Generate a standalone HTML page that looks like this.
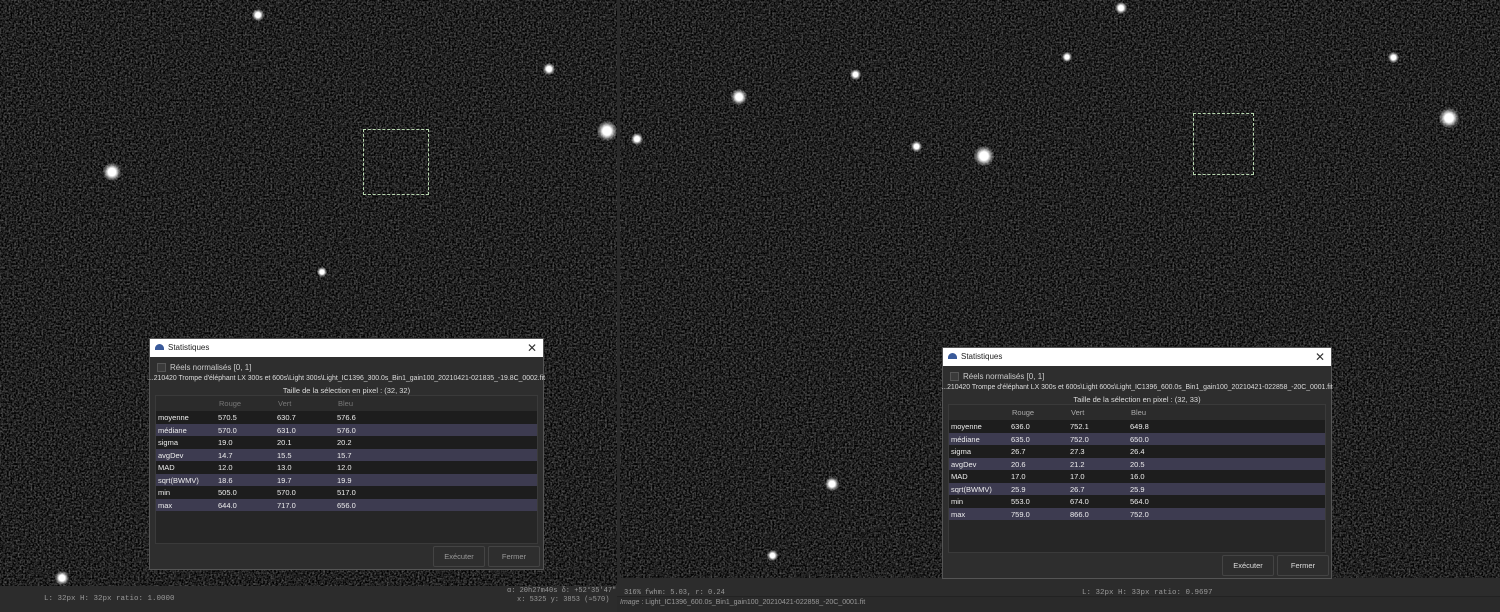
<!DOCTYPE html>
<html><head><meta charset="utf-8"><style>
*{margin:0;padding:0;box-sizing:border-box}
body{width:1500px;height:612px;background:#2a2a2a;position:relative;overflow:hidden;font-family:"Liberation Sans",sans-serif}
.field{position:absolute;background:#1c1c1c;overflow:hidden}
.star{position:absolute;border-radius:50%;background:radial-gradient(circle,#fff 0,#fff 30%,rgba(255,255,255,.35) 55%,rgba(255,255,255,0) 75%)}
.sel{position:absolute;border:1px dashed #b8d8b0}
.dlg{position:absolute;background:#2e2e2e;border:1px solid #555;color:#ddd;font-size:8px}
.tb{height:18px;background:#fff;color:#222;font-size:8px;line-height:18px;padding-left:18px;position:relative}
.tb .ic{position:absolute;left:5px;top:5px;width:9px;height:6px;background:#3a5a9a;border-radius:5px 5px 0 0}
.tb .x{position:absolute;right:6px;top:0;font-size:12px;color:#333}
.cb{position:absolute;left:7px;top:24px;width:9px;height:9px;background:#3a3a3a;border:1px solid #555}
.lbl{position:absolute;left:20px;top:24px;font-size:8px;color:#ccc}
.path{position:absolute;left:-10px;right:-10px;top:36px;text-align:center;font-size:6.9px;color:#ddd;white-space:nowrap}
.size{position:absolute;left:0;right:0;top:47px;text-align:center;font-size:7.5px;color:#ddd}
.tab{position:absolute;left:5px;right:5px;top:56px;height:149px;background:#262626;border:1px solid #3a3a3a}
.hd{height:15px;background:#2b2b2b;position:relative;color:#777;font-size:7.5px}
.row{height:12.5px;position:relative;font-size:7.5px;color:#eee}
.row:nth-child(odd){background:#1d1d1d}.row:nth-child(even){background:#3d3b50}
.c{position:absolute;top:2px}
.btn{position:absolute;top:207px;height:21px;width:52px;border:1px solid #444;background:#2e2e2e;color:#999;font-size:7.5px;text-align:center;line-height:19px;border-radius:2px}
.mono{font-family:"Liberation Mono",monospace;font-size:7.5px;color:#999;position:absolute;white-space:nowrap}
</style></head><body>
<svg width="0" height="0" style="position:absolute">
<filter id="g" color-interpolation-filters="sRGB"><feTurbulence type="fractalNoise" baseFrequency="0.55" numOctaves="2" seed="7"/><feColorMatrix type="saturate" values="0"/><feComponentTransfer><feFuncR type="linear" slope="0.9" intercept="-0.32"/><feFuncG type="linear" slope="0.9" intercept="-0.32"/><feFuncB type="linear" slope="0.9" intercept="-0.32"/><feFuncA type="linear" slope="0" intercept="1"/></feComponentTransfer></filter></svg>

<div class="field" style="left:0;top:0;width:617px;height:586px">
<svg width="617" height="586" style="position:absolute;left:0;top:0"><rect width="617" height="586" filter="url(#g)"/></svg>
<div class="star" style="left:103px;top:163px;width:18px;height:18px"></div>
<div class="star" style="left:597px;top:121px;width:20px;height:20px"></div>
<div class="star" style="left:543px;top:63px;width:12px;height:12px"></div>
<div class="star" style="left:252px;top:9px;width:12px;height:12px"></div>
<div class="star" style="left:317px;top:267px;width:10px;height:10px"></div>
<div class="star" style="left:55px;top:571px;width:14px;height:14px"></div>
<div class="sel" style="left:363px;top:129px;width:66px;height:66px"></div>
</div>

<div class="field" style="left:620px;top:0;width:880px;height:578px">
<svg width="880" height="578" style="position:absolute;left:0;top:0"><rect width="880" height="578" filter="url(#g)"/></svg>
<div class="star" style="left:111px;top:89px;width:16px;height:16px"></div>
<div class="star" style="left:354px;top:146px;width:20px;height:20px"></div>
<div class="star" style="left:819px;top:108px;width:20px;height:20px"></div>
<div class="star" style="left:205px;top:477px;width:14px;height:14px"></div>
<div class="star" style="left:495px;top:2px;width:12px;height:12px"></div>
<div class="star" style="left:230px;top:69px;width:11px;height:11px"></div>
<div class="star" style="left:11px;top:133px;width:12px;height:12px"></div>
<div class="star" style="left:291px;top:141px;width:11px;height:11px"></div>
<div class="star" style="left:768px;top:52px;width:11px;height:11px"></div>
<div class="star" style="left:147px;top:550px;width:11px;height:11px"></div>
<div class="star" style="left:442px;top:52px;width:10px;height:10px"></div>
<div class="sel" style="left:573px;top:113px;width:61px;height:62px"></div>
</div>

<div style="position:absolute;left:0;top:586px;width:617px;height:26px;background:#2c2c2c"></div>
<div style="position:absolute;left:617px;top:578px;width:883px;height:18px;background:#2c2c2c"></div>
<div style="position:absolute;left:617px;top:596px;width:883px;height:16px;background:#2a2a2a;border-top:1px solid #222"></div>
<div class="mono" style="left:44px;top:595px">L: 32px H: 32px ratio: 1.0000</div>
<div class="mono" style="left:507px;top:587px;font-size:7px">α: 20h27m40s δ: +52°35'47"</div>
<div class="mono" style="left:517px;top:596px;font-size:7px">x: 5325 y: 3853 (≈570)</div>
<div class="mono" style="left:624px;top:589px;font-size:7px">316%   fwhm: 5.03, r: 0.24</div>
<div class="mono" style="left:1082px;top:589px">L: 32px H: 33px ratio: 0.9697</div>
<div style="position:absolute;left:620px;top:599px;font-size:7px;color:#999"><i>Image</i> : Light_IC1396_600.0s_Bin1_gain100_20210421-022858_-20C_0001.fit</div>

<div class="dlg" style="left:149px;top:338px;width:395px;height:232px">
<div class="tb"><span class="ic"></span>Statistiques<span class="x">✕</span></div>
<div class="cb"></div><div class="lbl">Réels normalisés [0, 1]</div>
<div class="path">...210420 Trompe d'éléphant LX 300s et 600s\Light 300s\Light_IC1396_300.0s_Bin1_gain100_20210421-021835_-19.8C_0002.fit</div>
<div class="size">Taille de la sélection en pixel : (32, 32)</div>
<div class="tab">
<div class="hd"><span class="c" style="left:63px;top:3px">Rouge</span><span class="c" style="left:122px;top:3px">Vert</span><span class="c" style="left:182px;top:3px">Bleu</span></div>
<div>
<div class="row"><span class="c" style="left:2px">moyenne</span><span class="c" style="left:62px">570.5</span><span class="c" style="left:121px">630.7</span><span class="c" style="left:181px">576.6</span></div>
<div class="row"><span class="c" style="left:2px">médiane</span><span class="c" style="left:62px">570.0</span><span class="c" style="left:121px">631.0</span><span class="c" style="left:181px">576.0</span></div>
<div class="row"><span class="c" style="left:2px">sigma</span><span class="c" style="left:62px">19.0</span><span class="c" style="left:121px">20.1</span><span class="c" style="left:181px">20.2</span></div>
<div class="row"><span class="c" style="left:2px">avgDev</span><span class="c" style="left:62px">14.7</span><span class="c" style="left:121px">15.5</span><span class="c" style="left:181px">15.7</span></div>
<div class="row"><span class="c" style="left:2px">MAD</span><span class="c" style="left:62px">12.0</span><span class="c" style="left:121px">13.0</span><span class="c" style="left:181px">12.0</span></div>
<div class="row"><span class="c" style="left:2px">sqrt(BWMV)</span><span class="c" style="left:62px">18.6</span><span class="c" style="left:121px">19.7</span><span class="c" style="left:181px">19.9</span></div>
<div class="row"><span class="c" style="left:2px">min</span><span class="c" style="left:62px">505.0</span><span class="c" style="left:121px">570.0</span><span class="c" style="left:181px">517.0</span></div>
<div class="row"><span class="c" style="left:2px">max</span><span class="c" style="left:62px">644.0</span><span class="c" style="left:121px">717.0</span><span class="c" style="left:181px">656.0</span></div>
</div></div>
<div class="btn" style="left:283px">Exécuter</div><div class="btn" style="left:338px">Fermer</div>
</div>

<div class="dlg" style="left:942px;top:347px;width:390px;height:232px">
<div class="tb"><span class="ic"></span>Statistiques<span class="x">✕</span></div>
<div class="cb"></div><div class="lbl">Réels normalisés [0, 1]</div>
<div class="path">...210420 Trompe d'éléphant LX 300s et 600s\Light 600s\Light_IC1396_600.0s_Bin1_gain100_20210421-022858_-20C_0001.fit</div>
<div class="size">Taille de la sélection en pixel : (32, 33)</div>
<div class="tab">
<div class="hd" style="color:#aaa"><span class="c" style="left:63px;top:3px">Rouge</span><span class="c" style="left:122px;top:3px">Vert</span><span class="c" style="left:182px;top:3px">Bleu</span></div>
<div>
<div class="row"><span class="c" style="left:2px">moyenne</span><span class="c" style="left:62px">636.0</span><span class="c" style="left:121px">752.1</span><span class="c" style="left:181px">649.8</span></div>
<div class="row"><span class="c" style="left:2px">médiane</span><span class="c" style="left:62px">635.0</span><span class="c" style="left:121px">752.0</span><span class="c" style="left:181px">650.0</span></div>
<div class="row"><span class="c" style="left:2px">sigma</span><span class="c" style="left:62px">26.7</span><span class="c" style="left:121px">27.3</span><span class="c" style="left:181px">26.4</span></div>
<div class="row"><span class="c" style="left:2px">avgDev</span><span class="c" style="left:62px">20.6</span><span class="c" style="left:121px">21.2</span><span class="c" style="left:181px">20.5</span></div>
<div class="row"><span class="c" style="left:2px">MAD</span><span class="c" style="left:62px">17.0</span><span class="c" style="left:121px">17.0</span><span class="c" style="left:181px">16.0</span></div>
<div class="row"><span class="c" style="left:2px">sqrt(BWMV)</span><span class="c" style="left:62px">25.9</span><span class="c" style="left:121px">26.7</span><span class="c" style="left:181px">25.9</span></div>
<div class="row"><span class="c" style="left:2px">min</span><span class="c" style="left:62px">553.0</span><span class="c" style="left:121px">674.0</span><span class="c" style="left:181px">564.0</span></div>
<div class="row"><span class="c" style="left:2px">max</span><span class="c" style="left:62px">759.0</span><span class="c" style="left:121px">866.0</span><span class="c" style="left:181px">752.0</span></div>
</div></div>
<div class="btn" style="left:279px;color:#ddd">Exécuter</div><div class="btn" style="left:334px;color:#ddd">Fermer</div>
</div>
</body></html>
